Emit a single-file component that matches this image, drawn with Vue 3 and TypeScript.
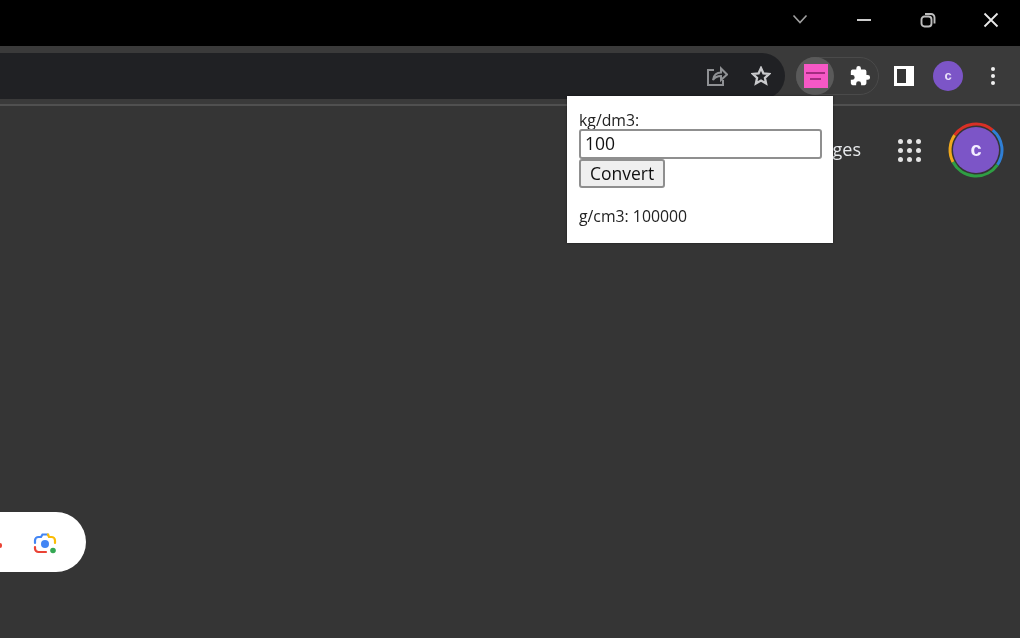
<script setup lang="ts">
const dots: number[] = [0, 1, 2, 3, 4, 5, 6, 7, 8];
</script>

<template>
  <div class="window">
    <header class="titlebar">
      <svg class="tb-icon chevron" width="16" height="12" viewBox="0 0 16 12"><path d="M1.500 2.500 8 9.500l6.500-7" /></svg>
      <svg class="tb-icon minimize" width="16" height="12" viewBox="0 0 16 12"><path d="M1 6h14" /></svg>
      <svg class="tb-icon restore" width="16" height="16" viewBox="0 0 16 16"><rect x="1.500" y="4.500" width="10" height="10" rx="3" /><path d="M5 2h6A3.500 3.500 0 0 1 14.500 5.500v6" /></svg>
      <svg class="tb-icon close" width="16" height="16" viewBox="0 0 16 16"><path d="M1.500 1.500l13 13M14.500 1.500l-13 13" /></svg>
    </header>

    <nav class="toolbar">
      <div class="omnibox">
        <svg class="tool share" width="22" height="20" viewBox="0 0 22 20"><path d="M8 4H2v15h15v-5" /><path d="M7 14c.5-5 4-7.500 8-7.500V2.500l6 6-6 5.500V10c-3.500 0-6 1-8 4z" /></svg>
        <svg class="tool star" width="20" height="20" viewBox="0 0 20 20"><path d="M10 2l2.400 5.300 5.800.6-4.300 3.900 1.200 5.700-5.100-2.900-5.100 2.900 1.200-5.700-4.300-3.900 5.800-.6z" /></svg>
      </div>
      <div class="ext-group">
        <div class="ext-active">
          <div class="ext-logo"><span class="ext-line"></span><span class="ext-line short"></span></div>
        </div>
        <svg class="puzzle" width="22" height="22" viewBox="0 0 24 24"><path d="M20.500 11H19V7a2 2 0 0 0-2-2h-4V3.500a2.500 2.500 0 0 0-5 0V5H4a2 2 0 0 0-2 2v3.800h1.500a2.700 2.700 0 0 1 0 5.400H2V20a2 2 0 0 0 2 2h3.800v-1.500a2.700 2.700 0 0 1 5.400 0V22H17a2 2 0 0 0 2-2v-4h1.500a2.500 2.500 0 0 0 0-5z" /></svg>
      </div>
      <div class="side-panel"><span></span></div>
      <div class="avatar-small">c</div>
      <div class="menu-dots"><i></i><i></i><i></i></div>
    </nav>

    <main class="content">
      <div class="top-links">
        <span class="images-link">Images</span>
        <div class="apps-grid"><i v-for="d in dots" :key="d"></i></div>
        <div class="account">
          <svg class="ring" width="56" height="56" viewBox="0 0 56 56">
            <path d="M6.600 13.200A26 26 0 0 1 44.700 8.100" stroke="#d93025" />
            <path d="M44.700 8.100A26 26 0 0 1 49.400 42.800" stroke="#2f7fd6" />
            <path d="M49.400 42.800A26 26 0 0 1 5 40" stroke="#2f9e44" />
            <path d="M5 40A26 26 0 0 1 6.600 13.200" stroke="#f0a81c" />
          </svg>
          <div class="avatar-big">c</div>
        </div>
      </div>

      <div class="search-end">
        <span class="mic-tip"></span>
        <svg width="26" height="26" viewBox="0 0 26 26" class="lens">
          <path d="M3 12V9.500A3.500 3.500 0 0 1 6.500 6h2.500L10.500 3.500h5L16 4" stroke="#4285f4" />
          <path d="M16 3.500 17 6h2.500A3.500 3.500 0 0 1 23 9.500V12" stroke="#fbbc04" />
          <path d="M3 16v1.500A3.500 3.500 0 0 0 6.500 21H14" stroke="#ea4335" />
          <circle cx="13" cy="13" r="4" fill="#4285f4" stroke="none" />
          <circle cx="21" cy="19.500" r="2.800" fill="#34a853" stroke="none" />
        </svg>
      </div>

      <section class="popup">
        <label class="field-label" for="density">kg/dm3:</label>
        <input id="density" class="field" type="text" value="100" />
        <button class="convert" type="button">Convert</button>
        <p class="result">g/cm3: 100000</p>
      </section>
    </main>
  </div>
</template>

<style>
html, body { margin: 0; background: #353535; }
</style>

<style scoped>
.window {
  width: 1020px;
  height: 638px;
  display: flex;
  flex-direction: column;
  overflow: hidden;
  background: #353535;
  font-family: "Open Sans", "Liberation Sans", sans-serif;
  filter: blur(0.6px);
}
.titlebar {
  height: 46px;
  flex: none;
  background: #000;
  display: flex;
  align-items: center;
  justify-content: flex-end;
  position: relative;
}
.tb-icon { fill: none; stroke: #d6d6d6; stroke-width: 1.600; flex: none; }
.chevron { margin-right: 48px; margin-top: -8px; stroke: #a0a0a0; }
.minimize { margin-right: 48px; margin-top: -6px; stroke: #e4e4e4; stroke-width: 1.800; }
.restore { margin-right: 47px; margin-top: -7px; stroke: #bdbdbd; stroke-width: 1.900; }
.close { margin-right: 21px; margin-top: -7px; stroke: #e8e8e8; stroke-width: 1.800; }

.toolbar {
  height: 60px;
  flex: none;
  box-sizing: border-box;
  border-bottom: 2px solid #505050;
  background: #3a3a3a;
  display: flex;
  align-items: center;
  padding-top: 2px;
}
.omnibox {
  width: 785px;
  height: 46px;
  flex: none;
  box-sizing: border-box;
  background: #202124;
  border-radius: 0 24px 24px 0;
  display: flex;
  align-items: center;
  justify-content: flex-end;
  gap: 23px;
  padding-right: 14px;
}
.tool { fill: none; stroke-width: 2; }
.share { stroke: #8f9194; }
.star { stroke: #c9cacc; stroke-width: 2.300; }
.ext-group {
  margin-left: 11px;
  width: 83px;
  height: 38px;
  flex: none;
  box-sizing: border-box;
  border: 1px solid #4a4a4a;
  border-radius: 19px;
  display: flex;
  align-items: center;
}
.ext-active {
  width: 38px;
  height: 38px;
  margin-left: -1px;
  flex: none;
  border-radius: 50%;
  background: #5a5a5a;
  display: flex;
  align-items: center;
  justify-content: center;
  padding-left: 1px;
  box-sizing: border-box;
}
.ext-logo {
  width: 24px;
  height: 24px;
  background: #f658c6;
  display: flex;
  flex-direction: column;
  align-items: center;
  justify-content: center;
  gap: 4px;
}
.ext-line { width: 19px; height: 2px; background: #a32d80; }
.ext-line.short { width: 11px; }
.puzzle { fill: #fff; margin-left: 15px; flex: none; }
.side-panel {
  width: 20px;
  height: 20px;
  margin-left: 15px;
  flex: none;
  box-sizing: border-box;
  background: #fff;
  padding: 3px;
}
.side-panel span { display: block; width: 9px; height: 14px; background: #353535; }
.avatar-small {
  width: 30px;
  height: 30px;
  margin-left: 19px;
  flex: none;
  border-radius: 50%;
  background: #7c55c7;
  color: #e8e0f8;
  font: 700 13px/29px "Liberation Sans", sans-serif;
  text-align: center;
}
.menu-dots {
  margin-left: 28px;
  flex: none;
  display: flex;
  flex-direction: column;
  gap: 3px;
}
.menu-dots i { display: block; width: 4px; height: 4px; border-radius: 50%; background: #f0f0f0; }

.content {
  flex: 1;
  position: relative;
  display: flex;
  flex-direction: column;
  justify-content: space-between;
  padding: 16px 0 66px;
}
.top-links {
  display: flex;
  align-items: center;
  justify-content: flex-end;
  height: 56px;
  padding-right: 16px;
}
.images-link { color: #e8eaed; font: 500 18px/20px "Open Sans", sans-serif; margin-top: -2px; margin-right: -1px; }
.apps-grid {
  margin-left: 38px;
  display: grid;
  grid-template-columns: repeat(3, 5px);
  gap: 4px;
}
.apps-grid i { display: block; width: 5px; height: 5px; border-radius: 50%; background: #e4e4e4; }
.account {
  position: relative;
  margin-left: 27px;
  width: 56px;
  height: 56px;
  display: flex;
  align-items: center;
  justify-content: center;
}
.ring { position: absolute; inset: 0; fill: none; stroke-width: 3; }
.avatar-big {
  width: 46px;
  height: 46px;
  border-radius: 50%;
  background: #7c55c7;
  color: #f3eeff;
  font: 700 20px/44px "Liberation Sans", sans-serif;
  text-align: center;
}
.search-end {
  width: 86px;
  height: 60px;
  background: #fff;
  border-radius: 0 30px 30px 0;
  display: flex;
  align-items: center;
  justify-content: flex-end;
  padding-right: 28px;
  box-sizing: border-box;
  position: relative;
}
.mic-tip { position: absolute; left: 0; top: 31px; width: 2px; height: 5px; background: #ea4335; border-radius: 0 2px 2px 0; }
.lens { fill: none; stroke-width: 2.200; stroke-linecap: round; margin: 3px 0 0; }

.popup {
  position: absolute;
  left: 567px;
  top: -10px;
  width: 266px;
  height: 147px;
  box-sizing: border-box;
  padding: 15px 11px 0 12px;
  background: #fff;
  display: flex;
  flex-direction: column;
  align-items: flex-start;
  color: #222;
  box-shadow: 0 0 2px rgba(0, 0, 0, 0.5);
}
.field-label { font-size: 15.800px; line-height: 18px; }
.field {
  width: 243px;
  height: 30px;
  box-sizing: border-box;
  border: 2px solid #8f8f8f;
  border-radius: 3px;
  padding: 0 4px 2px;
  font: 400 17.500px "Open Sans", sans-serif;
  color: #111;
  outline: none;
}
.convert {
  height: 29px;
  width: 86px;
  padding: 0 0 2px;
  box-sizing: border-box;
  border: 2px solid #8f8f8f;
  border-radius: 3px;
  background: #efefef;
  font: 400 17.500px "Open Sans", sans-serif;
  color: #111;
}
.result { margin: 18px 0 0; font-size: 15.800px; line-height: 20px; }
</style>
